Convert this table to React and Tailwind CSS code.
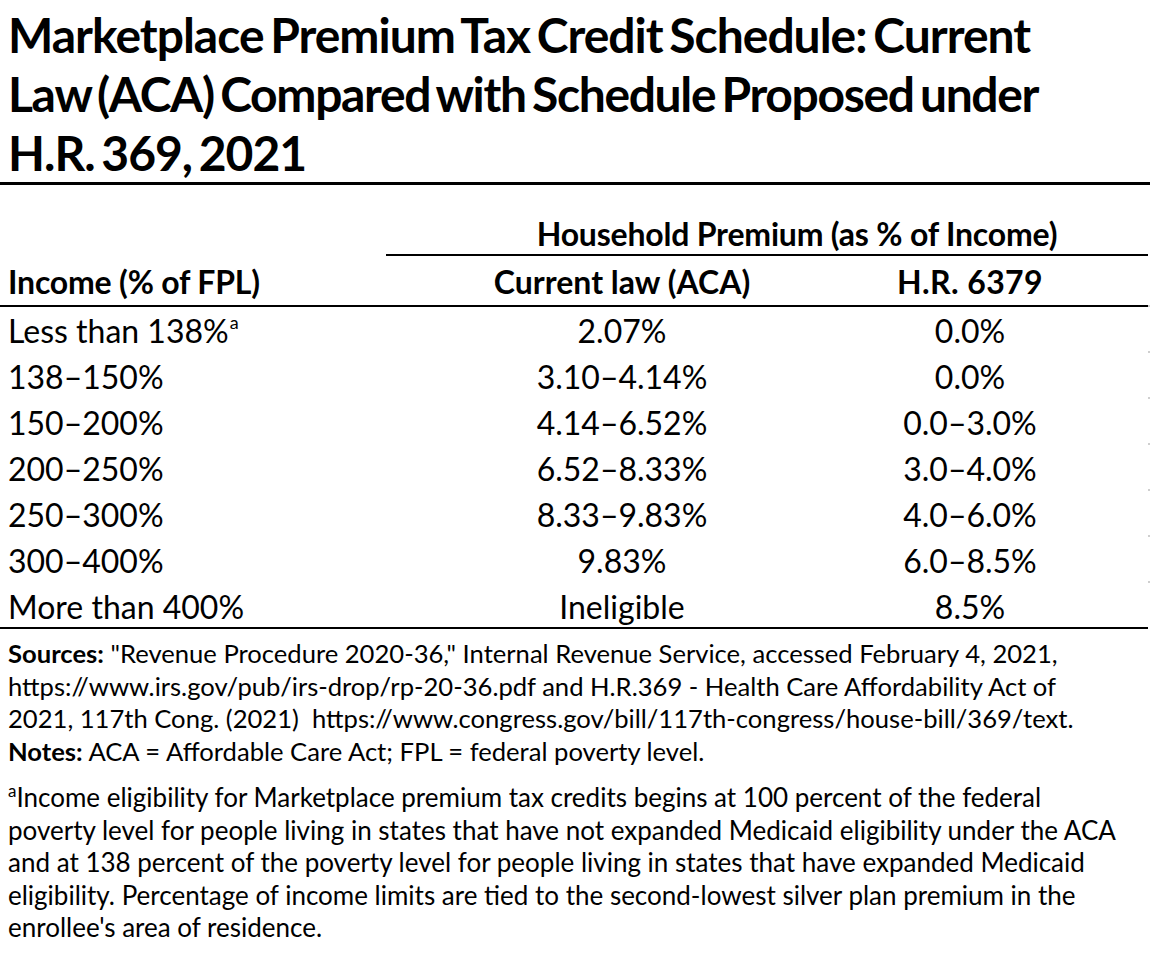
import React from "react";

const rows = [
  ["Less than 138%", "2.07%", "0.0%", true],
  ["138–150%", "3.10–4.14%", "0.0%"],
  ["150–200%", "4.14–6.52%", "0.0–3.0%"],
  ["200–250%", "6.52–8.33%", "3.0–4.0%"],
  ["250–300%", "8.33–9.83%", "4.0–6.0%"],
  ["300–400%", "9.83%", "6.0–8.5%"],
  ["More than 400%", "Ineligible", "8.5%"],
];

export default function App() {
  return (
    <div className="w-[1150px] h-[958px] overflow-hidden bg-white text-black font-['Lato','Liberation_Sans',sans-serif]">
      <h1 className="pl-[8px] pt-[5px] text-[48px] leading-[59px] font-bold tracking-[-1px] [word-spacing:-4px] whitespace-nowrap">
        Marketplace Premium Tax Credit Schedule: Current
        <br />
        <span className="tracking-[-1.35px]">Law (ACA) Compared with Schedule Proposed under</span>
        <br />
        H.R. 369, 2021
      </h1>
      <div className="h-[3px] bg-black" />

      <div className="w-[1150px] pt-[32px]">
        <div className="grid grid-cols-[386px_1fr]">
          <div />
          <div className="mr-[2px] border-b-2 border-black pb-[3px] pl-[60px] text-center text-[32px] leading-[34px] font-bold tracking-[-0.2px] whitespace-nowrap">
            Household Premium (as % of Income)
          </div>
        </div>
        <div className="grid grid-cols-[386px_472px_224px_1fr] pt-[9px] pb-[6px] text-[32px] leading-[34px] font-bold whitespace-nowrap">
          <div className="pl-[8px] tracking-[-0.2px]">Income (% of FPL)</div>
          <div className="text-center">Current law (ACA)</div>
          <div className="text-center tracking-[0.4px]">H.R. 6379</div>
          <div />
        </div>
        <div className="mr-[2px] h-[2px] bg-black" />
        <div className="-mt-[2px]">
          {rows.map(([a, b, c, sup]) => (
            <div
              key={a}
              className="grid h-[46px] grid-cols-[386px_472px_224px_1fr] text-[32px] leading-[40px] whitespace-nowrap"
            >
              <div className="pl-[8px] pt-[6px]">
                {a}
                {sup && (
                  <sup className="relative -top-[14px] ml-[1px] text-[18px] leading-none">a</sup>
                )}
              </div>
              <div className="pt-[6px] text-center">{b}</div>
              <div className="pt-[6px] text-center">{c}</div>
              <div className="flex items-start justify-end">
                <div className="h-[2px] w-[2px] bg-[#cfcfcf]" />
              </div>
            </div>
          ))}
        </div>
        <div className="mr-[2px] h-[2px] bg-black" />
      </div>

      <div className="pl-[8px] pt-[8px] leading-[32.5px] whitespace-pre">
        <div className="text-[25.6px]">
          <span className="font-bold">Sources:</span> "Revenue Procedure 2020-36," Internal Revenue Service, accessed February 4, 2021,
          <br />
          https://www.irs.gov/pub/irs-drop/rp-20-36.pdf and H.R.369 - Health Care Affordability Act of
          <br />
          2021, 117th Cong. (2021)  https://www.congress.gov/bill/117th-congress/house-bill/369/text.
          <br />
          <span className="font-bold">Notes:</span> ACA = Affordable Care Act; FPL = federal poverty level.
        </div>
        <div className="pt-[14px] text-[26px]">
          <sup className="relative -top-[10px] text-[17px] leading-none">a</sup>Income eligibility for Marketplace premium tax credits begins at 100 percent of the federal
          <br />
          poverty level for people living in states that have not expanded Medicaid eligibility under the ACA
          <br />
          and at 138 percent of the poverty level for people living in states that have expanded Medicaid
          <br />
          eligibility. Percentage of income limits are tied to the second-lowest silver plan premium in the
          <br />
          enrollee's area of residence.
        </div>
      </div>
    </div>
  );
}
